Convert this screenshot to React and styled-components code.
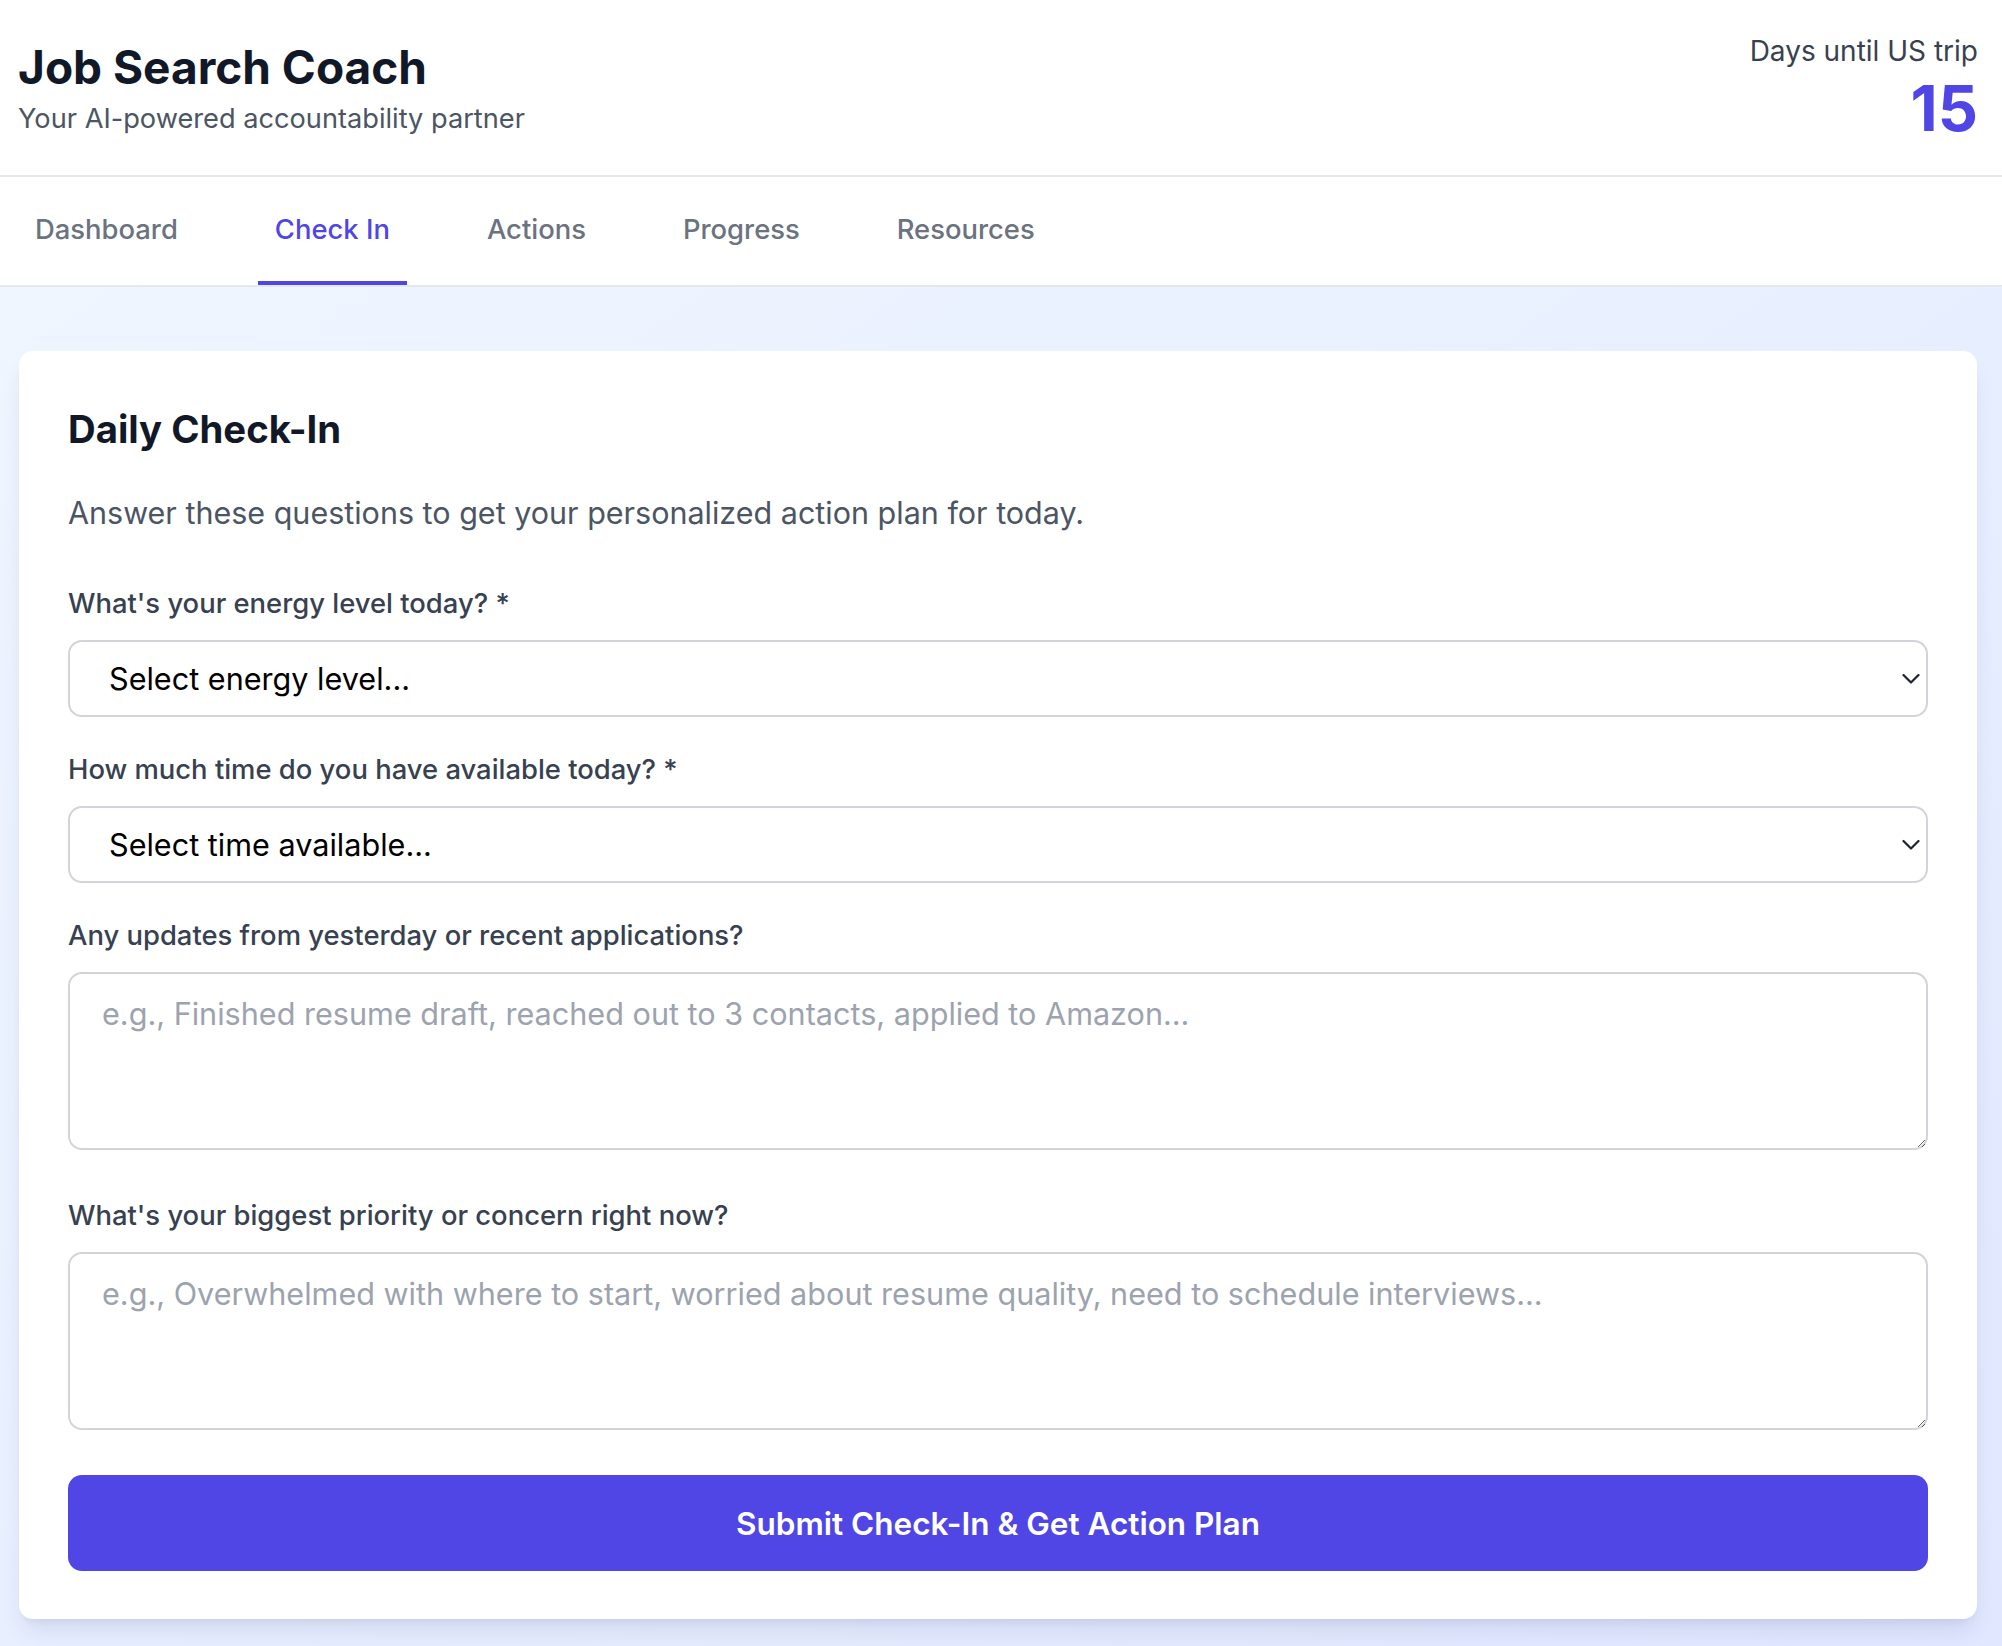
import React from 'react';
import styled, { createGlobalStyle } from 'styled-components';

/*──────── globals ─────*/
const Global = createGlobalStyle`
  * { box-sizing: border-box; }
  body {
    margin: 0;
    font-family: Inter, "Noto Sans", "Liberation Sans", sans-serif;
    background: #ffffff;
  }
`;

/*──────── header ─────*/
const Header = styled.header`
  display: flex;
  justify-content: space-between;
  align-items: flex-start;
  padding: 33px 24px 37px 18px;
  background: #fff;
  border-bottom: 2px solid #e5e7eb;
`;

const Brand = styled.div`
  margin-top: 6px;
`;

const Title = styled.h1`
  margin: 0;
  font-size: 46px;
  line-height: 56px;
  font-weight: 700;
  color: #111827;
`;

const Subtitle = styled.p`
  margin: 6px 0 0;
  font-size: 27.2px;
  line-height: 36px;
  color: #4b5563;
`;

const Countdown = styled.div`
  text-align: right;
`;

const CountLabel = styled.div`
  font-size: 28px;
  line-height: 36px;
  color: #374151;
`;

const CountValue = styled.div`
  margin-top: 9px;
  font-size: 63px;
  line-height: 60px;
  font-weight: 700;
  color: #4f46e5;
`;

/*──────── tabs ─────*/
const Nav = styled.nav`
  display: flex;
  gap: 63px;
  padding-left: 18px;
  background: #fff;
  border-bottom: 2px solid #e5e7eb;
`;

const Tab = styled.button`
  appearance: none;
  background: none;
  border: 0;
  border-bottom: 4px solid ${p => (p.$active ? '#4f46e5' : 'transparent')};
  padding: 34px 17px;
  font-family: inherit;
  font-size: 27.4px;
  line-height: 36px;
  font-weight: 500;
  color: ${p => (p.$active ? '#4f46e5' : '#6b7280')};
  cursor: pointer;
`;

/*──────── body ─────*/
const Main = styled.main`
  padding: 64px 25px 64px 19px;
  background: linear-gradient(to bottom right, #eff6ff, #e0e7ff);
`;

const Card = styled.section`
  background: #fff;
  border-radius: 14px;
  padding: 54px 49px 48px;
  box-shadow: 0 16px 24px -5px rgba(30, 41, 90, .1), 0 6px 10px -6px rgba(30, 41, 90, .1);
`;

const Heading = styled.h2`
  margin: 0;
  font-size: 38.3px;
  line-height: 48px;
  font-weight: 700;
  color: #111827;
`;

const Intro = styled.p`
  margin: 40px 0 52px;
  font-size: 30.5px;
  line-height: 40px;
  color: #4b5563;
`;

const Field = styled.div`
  margin-bottom: ${p => p.$after}px;
`;

const Label = styled.label`
  display: block;
  margin-bottom: 19px;
  font-size: 27.4px;
  line-height: 36px;
  font-weight: 500;
  color: #374151;
`;

const SelectWrap = styled.div`
  position: relative;
`;

const Select = styled.select`
  display: block;
  width: 100%;
  height: 77px;
  appearance: none;
  padding: 0 60px 0 39px;
  font-family: inherit;
  font-size: 30.6px;
  color: #000;
  background: #fff;
  border: 2px solid #d1d5db;
  border-radius: 14px;
  outline: none;
`;

const Chevron = styled.svg`
  position: absolute;
  right: 8px;
  top: 50%;
  transform: translateY(-50%);
  pointer-events: none;
`;

const Area = styled.textarea`
  display: block;
  width: 100%;
  height: 178px;
  padding: 17px 32px;
  font-family: inherit;
  font-size: 30.6px;
  line-height: 45px;
  color: #111827;
  background: #fff;
  border: 2px solid #d1d5db;
  border-radius: 14px;
  resize: vertical;
  outline: none;
  &::placeholder { color: #9ca3af; }
`;

const Submit = styled.button`
  display: block;
  width: 100%;
  height: 96px;
  border: 0;
  border-radius: 14px;
  background: #4f46e5;
  color: #fff;
  font-family: inherit;
  font-size: 31.5px;
  font-weight: 600;
  cursor: pointer;
`;

const TABS = ['Dashboard', 'Check In', 'Actions', 'Progress', 'Resources'];

function Dropdown({ placeholder }) {
  return (
    <SelectWrap>
      <Select defaultValue="">
        <option value="">{placeholder}</option>
      </Select>
      <Chevron width="18" height="11" viewBox="0 0 18 11" fill="none">
        <path d="M1.5 1.5 L9 9 L16.5 1.5" stroke="#1f2330" strokeWidth="2.2" strokeLinecap="round" strokeLinejoin="round" />
      </Chevron>
    </SelectWrap>
  );
}

/*════════ component ═══════════════════════════════════════*/
export default function App() {
  return (
    <>
      <Global />
      <Header>
        <Brand>
          <Title>Job Search Coach</Title>
          <Subtitle>Your AI-powered accountability partner</Subtitle>
        </Brand>
        <Countdown>
          <CountLabel>Days until US trip</CountLabel>
          <CountValue>15</CountValue>
        </Countdown>
      </Header>

      <Nav>
        {TABS.map(t => <Tab key={t} $active={t === 'Check In'}>{t}</Tab>)}
      </Nav>

      <Main>
        <Card>
          <Heading>Daily Check-In</Heading>
          <Intro>Answer these questions to get your personalized action plan for today.</Intro>

          <Field $after={34}>
            <Label>What's your energy level today? *</Label>
            <Dropdown placeholder="Select energy level..." />
          </Field>

          <Field $after={34}>
            <Label>How much time do you have available today? *</Label>
            <Dropdown placeholder="Select time available..." />
          </Field>

          <Field $after={47}>
            <Label>Any updates from yesterday or recent applications?</Label>
            <Area placeholder="e.g., Finished resume draft, reached out to 3 contacts, applied to Amazon..." />
          </Field>

          <Field $after={45}>
            <Label>What's your biggest priority or concern right now?</Label>
            <Area placeholder="e.g., Overwhelmed with where to start, worried about resume quality, need to schedule interviews..." />
          </Field>

          <Submit>Submit Check-In &amp; Get Action Plan</Submit>
        </Card>
      </Main>
    </>
  );
}
